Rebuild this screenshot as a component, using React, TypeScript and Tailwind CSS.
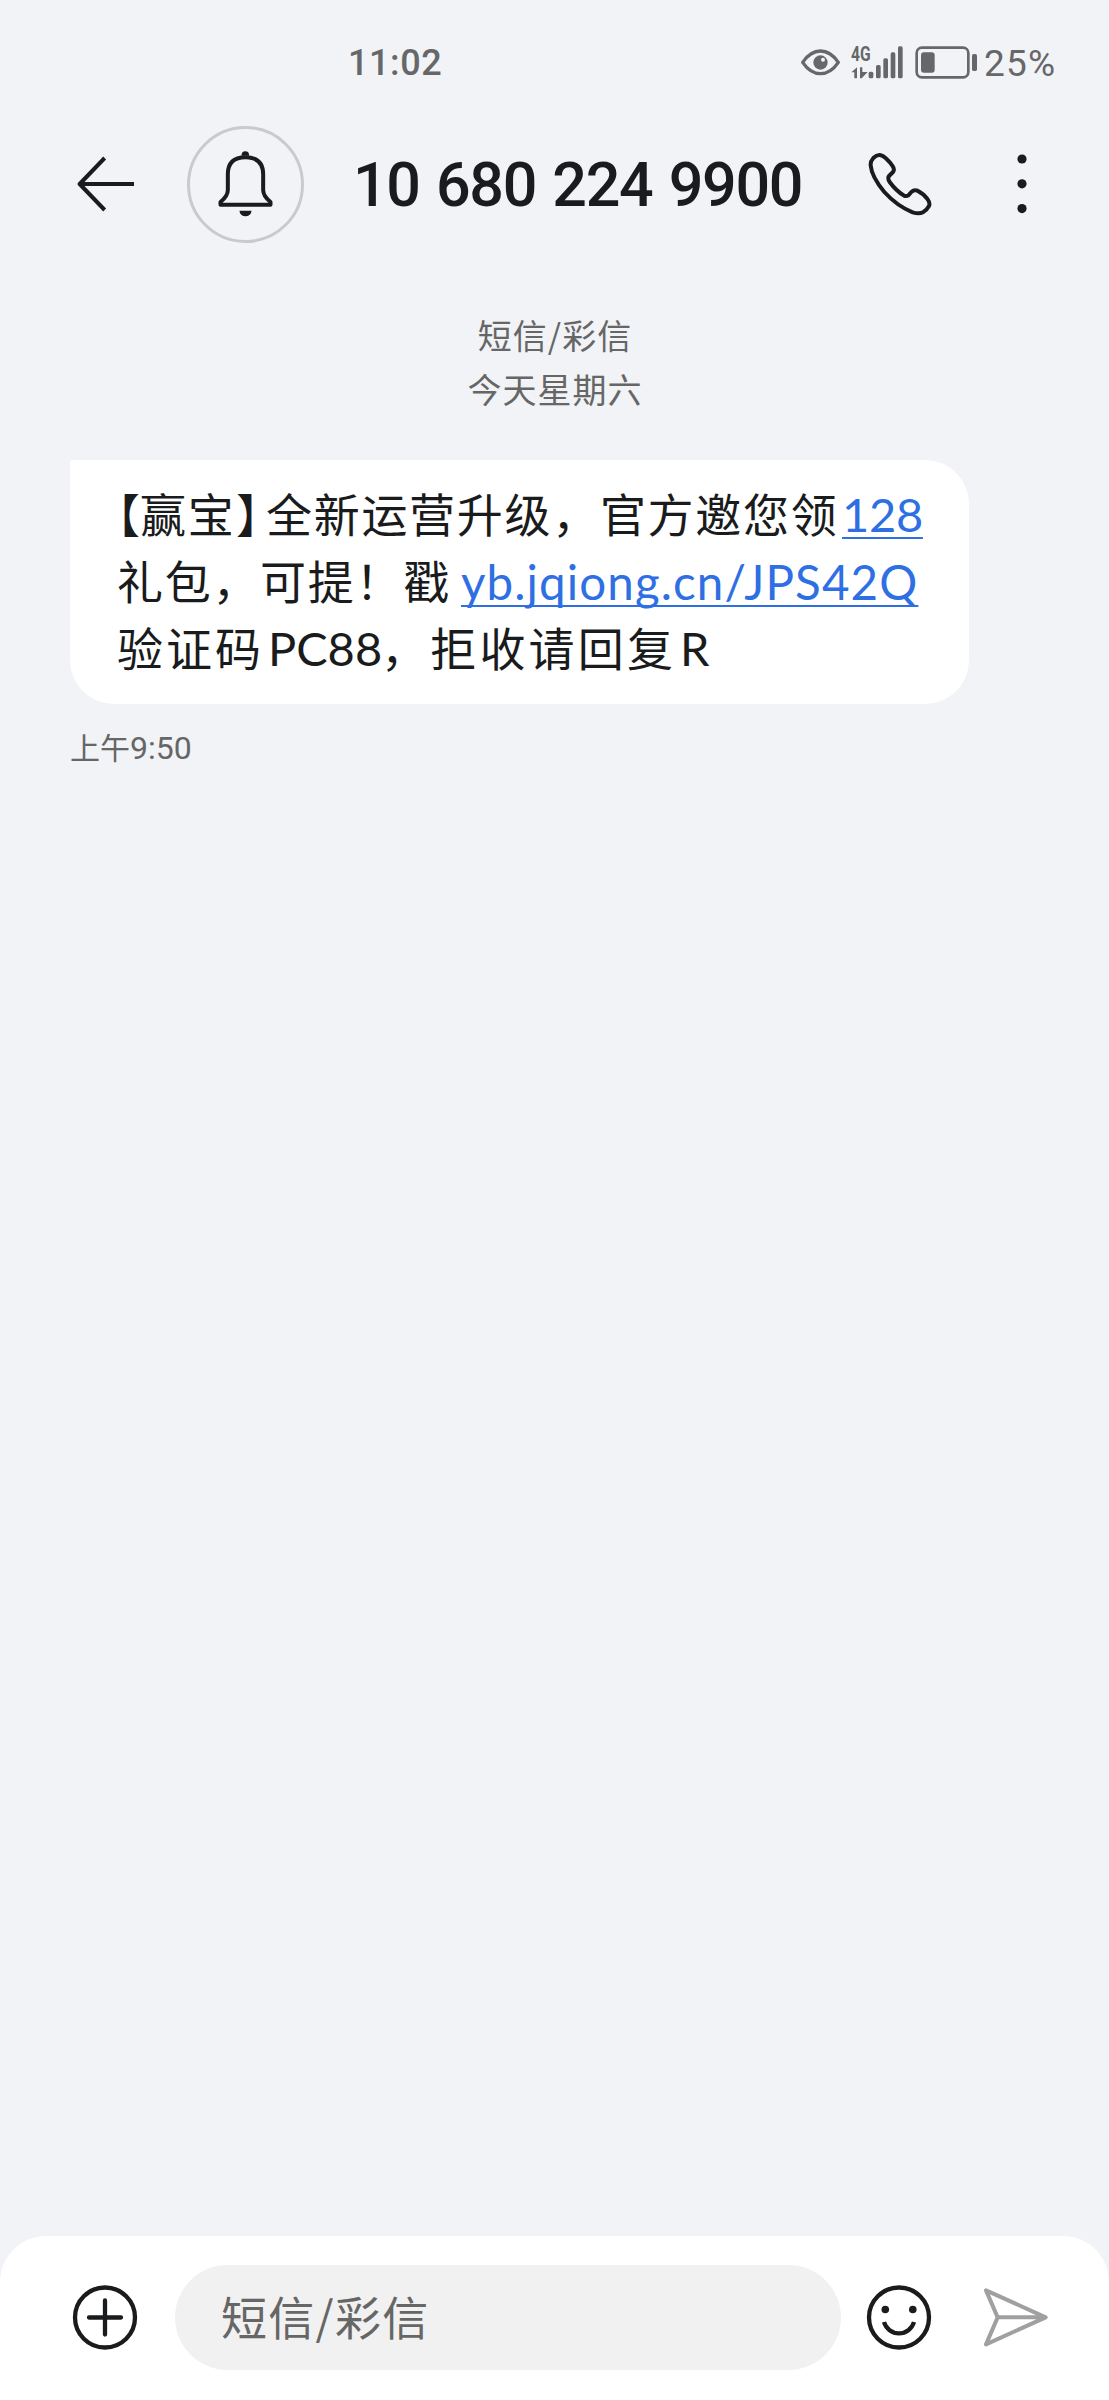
import React from "react";

function Eye() {
  return (
    <svg width="39" height="27" viewBox="32 56 117 81" fill="none">
      <path d="M37 96 Q60 62 90.500 62 Q121 62 144 96 Q121 130 90.500 130 Q60 130 37 96Z" stroke="#666769" strokeWidth="10" strokeLinejoin="round" />
      <circle cx="90.500" cy="96.500" r="21.500" fill="#666769" />
      <circle cx="98" cy="88" r="6" fill="#f1f3f7" />
    </svg>
  );
}

function Signal() {
  return (
    <svg width="36" height="33" viewBox="233 44 108 99" fill="#666769">
      <rect x="235" y="121" width="14" height="20" rx="5" />
      <rect x="257" y="101" width="14" height="40" rx="5" />
      <rect x="279" y="81" width="14" height="60" rx="5" />
      <rect x="301" y="63" width="14" height="78" rx="5" />
      <rect x="323" y="45" width="14" height="96" rx="5" />
    </svg>
  );
}

function Battery() {
  return (
    <svg width="63" height="33" viewBox="374 46 189 99" fill="none">
      <rect x="379" y="51" width="155" height="89" rx="16" stroke="#666769" strokeWidth="8" />
      <rect x="392" y="65" width="41" height="61" rx="9" fill="#666769" />
      <rect x="545" y="70" width="15" height="51" rx="5" fill="#666769" />
    </svg>
  );
}

function StatusBar() {
  return (
    <div className="flex h-[124px] items-center font-[Roboto] text-[36px] leading-none text-[#666769]">
      <div className="ml-[348px] w-[92px] whitespace-nowrap pt-[2px] tracking-[0.6px] [font-weight:470]">11:02</div>
      <div className="ml-[361px]"><Eye /></div>
      <div className="ml-[11px] flex h-[33px] w-[17px] flex-col justify-between">
        <div className="h-[16px] origin-left scale-x-[0.78] text-[20px] font-bold leading-[16px]">4G</div>
        <svg width="17" height="12" viewBox="182 104 51 36" fill="#666769">
          <path d="M183 120 L200 105 V138 H192 V120Z M209 105 H216 V119 H232 L214 138 H209Z" />
        </svg>
      </div>
      <div><Signal /></div>
      <div className="ml-[11px]"><Battery /></div>
      <div className="ml-[6px] pt-[2px] text-[37px] tracking-[1.200px]">25%</div>
    </div>
  );
}

function Header() {
  return (
    <header className="flex h-[120px] items-center">
      <svg className="ml-[77px]" width="58" height="56" viewBox="81 137 174 168" fill="none" stroke="#1a1b1c" strokeWidth="12" strokeLinejoin="round">
        <path d="M164 143 L89 221 L164 299 M89 221 H252" />
      </svg>
      <div className="ml-[52px] flex h-[117px] w-[117px] items-center justify-center rounded-full border-3 border-[#c8cacd]">
        <svg width="57" height="68" viewBox="500 121 170 204" fill="none">
          <path d="M510 285 V277 Q532 259 532 241 V194 Q532 143 585 143 Q638 143 638 194 V241 Q638 259 660 277 V285Z" stroke="#1a1b1c" strokeWidth="12" strokeLinejoin="round" />
          <path d="M573 138 A11.500 13 0 0 1 596 138Z M567 303 H603 A18 17 0 0 1 567 303Z" fill="#1a1b1c" />
        </svg>
      </div>
      <h1 className="ml-[49px] w-[515px] whitespace-nowrap pt-[3px] font-[Roboto] text-[61px] font-medium leading-none tracking-[-1.300px] text-[#1a1b1c] [word-spacing:2.400px]">10 680 224 9900</h1>
      <svg width="64" height="64" viewBox="81 94 192 192" fill="none" stroke="#1a1b1c" strokeWidth="12" strokeLinejoin="round">
        <path d="M89 134 Q88 122 97 112 Q107 102 117 103 Q126 104 136 114 Q148 125 154 135 Q162 146 156 154 L144 166 Q139 173 146 184 Q165 210 189 225 Q196 228 202 224 L211 214 Q220 206 229 210 Q246 218 260 236 Q268 247 264 256 Q256 270 246 275 Q234 281 215 275 Q168 256 130 214 Q92 168 89 134Z" />
      </svg>
      <svg className="ml-[85px]" width="10" height="60" viewBox="0 0 10 60" fill="#1a1b1c">
        <circle cx="5" cy="5" r="4.600" />
        <circle cx="5" cy="29.800" r="4.600" />
        <circle cx="5" cy="54.600" r="4.600" />
      </svg>
    </header>
  );
}

const linkClass =
  "block whitespace-nowrap underline decoration-[2px] underline-offset-[5px] text-[#2f6fe4] [text-decoration-skip-ink:none]";

function Message() {
  return (
    <section className="ml-[70px] mt-[44px] h-[244px] w-[899px] rounded-[44px] rounded-tl-[3px] bg-white pl-[47px] pt-[21px] font-[Lato,'Noto_Sans_CJK_SC',sans-serif] text-[46px] text-[#1a1b1c]">
      <div className="flex h-[67px] whitespace-nowrap leading-[67px]">
        <span className="flex w-[23px] justify-end [font-feature-settings:'halt']">【</span>
        <span className="w-[96px] tracking-[1.800px]">赢宝</span>
        <span className="w-[30px] [font-feature-settings:'halt']">】</span>
        <span className="w-[576px] tracking-[1.700px]">全新运营升级，官方邀您领</span>
        <a className={`${linkClass} text-[47px] tracking-[-0.3px]`}>128</a>
      </div>
      <div className="flex h-[67px] whitespace-nowrap leading-[67px]">
        <span className="w-[344px] tracking-[1.700px]">礼包，可提！戳</span>
        <a className={`${linkClass} text-[47.500px] tracking-[1.100px]`}>yb.jqiong.cn/JPS42Q</a>
      </div>
      <div className="flex h-[67px] whitespace-nowrap leading-[67px]">
        <span className="w-[151px] tracking-[3px]">验证码</span>
        <span className="w-[113px] text-[47px]">PC88</span>
        <span className="w-[299px] tracking-[3.200px]">，拒收请回复</span>
        <span className="text-[47px]">R</span>
      </div>
    </section>
  );
}

function Composer() {
  return (
    <footer className="flex h-[164px] rounded-t-[46px] bg-white pt-[29px]">
      <svg className="ml-[72px] mt-[19px]" width="66" height="66" viewBox="0 0 66 66" fill="none" stroke="#1a1b1c" strokeWidth="4.300">
        <circle cx="33" cy="33.500" r="30" />
        <path d="M17 33.500 H49 M33 16.500 V50.500" strokeLinecap="round" />
      </svg>
      <div className="ml-[37px] flex h-[105px] w-[666px] items-center rounded-full bg-[#f1f1f1] pb-[5px] pl-[46px] font-['Noto_Sans_CJK_SC',sans-serif] text-[46px] leading-none tracking-[1.300px] text-[#666]">短信/彩信</div>
      <svg className="ml-[25px] mt-[19px]" width="66" height="66" viewBox="0 0 66 66" fill="none" stroke="#1a1b1c" strokeWidth="4.300">
        <circle cx="33" cy="33.500" r="30" />
        <circle cx="19.300" cy="25.500" r="3.800" fill="#1a1b1c" stroke="none" />
        <circle cx="46.800" cy="25.500" r="3.800" fill="#1a1b1c" stroke="none" />
        <path d="M18 38 A15.600 15.600 0 0 0 48 38" />
      </svg>
      <svg className="ml-[51px] mt-[22px]" width="66" height="62" viewBox="609 201 198 186" fill="none" stroke="#a0a0a0" strokeWidth="12" strokeLinejoin="round">
        <path d="M618 211 L797 292 L618 373 L653 292Z M653 292 H797" />
      </svg>
    </footer>
  );
}

export default function App() {
  return (
    <div className="flex h-[2400px] w-[1109px] flex-col overflow-hidden bg-[#f1f3f7]">
      <StatusBar />
      <Header />
      <div className="mt-[64px] pl-px text-center font-['Noto_Sans_CJK_SC',sans-serif] text-[34px] leading-[54px] tracking-[1px] text-[#666]">
        <div>短信/彩信</div>
        <div>今天星期六</div>
      </div>
      <Message />
      <div className="ml-[70px] mt-[24px] font-[Roboto,'Noto_Sans_CJK_SC',sans-serif] text-[30px] leading-[40px] text-[#666]">上午<span className="text-[32px] [font-weight:400]">9:50</span></div>
      <div className="flex-1" />
      <Composer />
    </div>
  );
}
